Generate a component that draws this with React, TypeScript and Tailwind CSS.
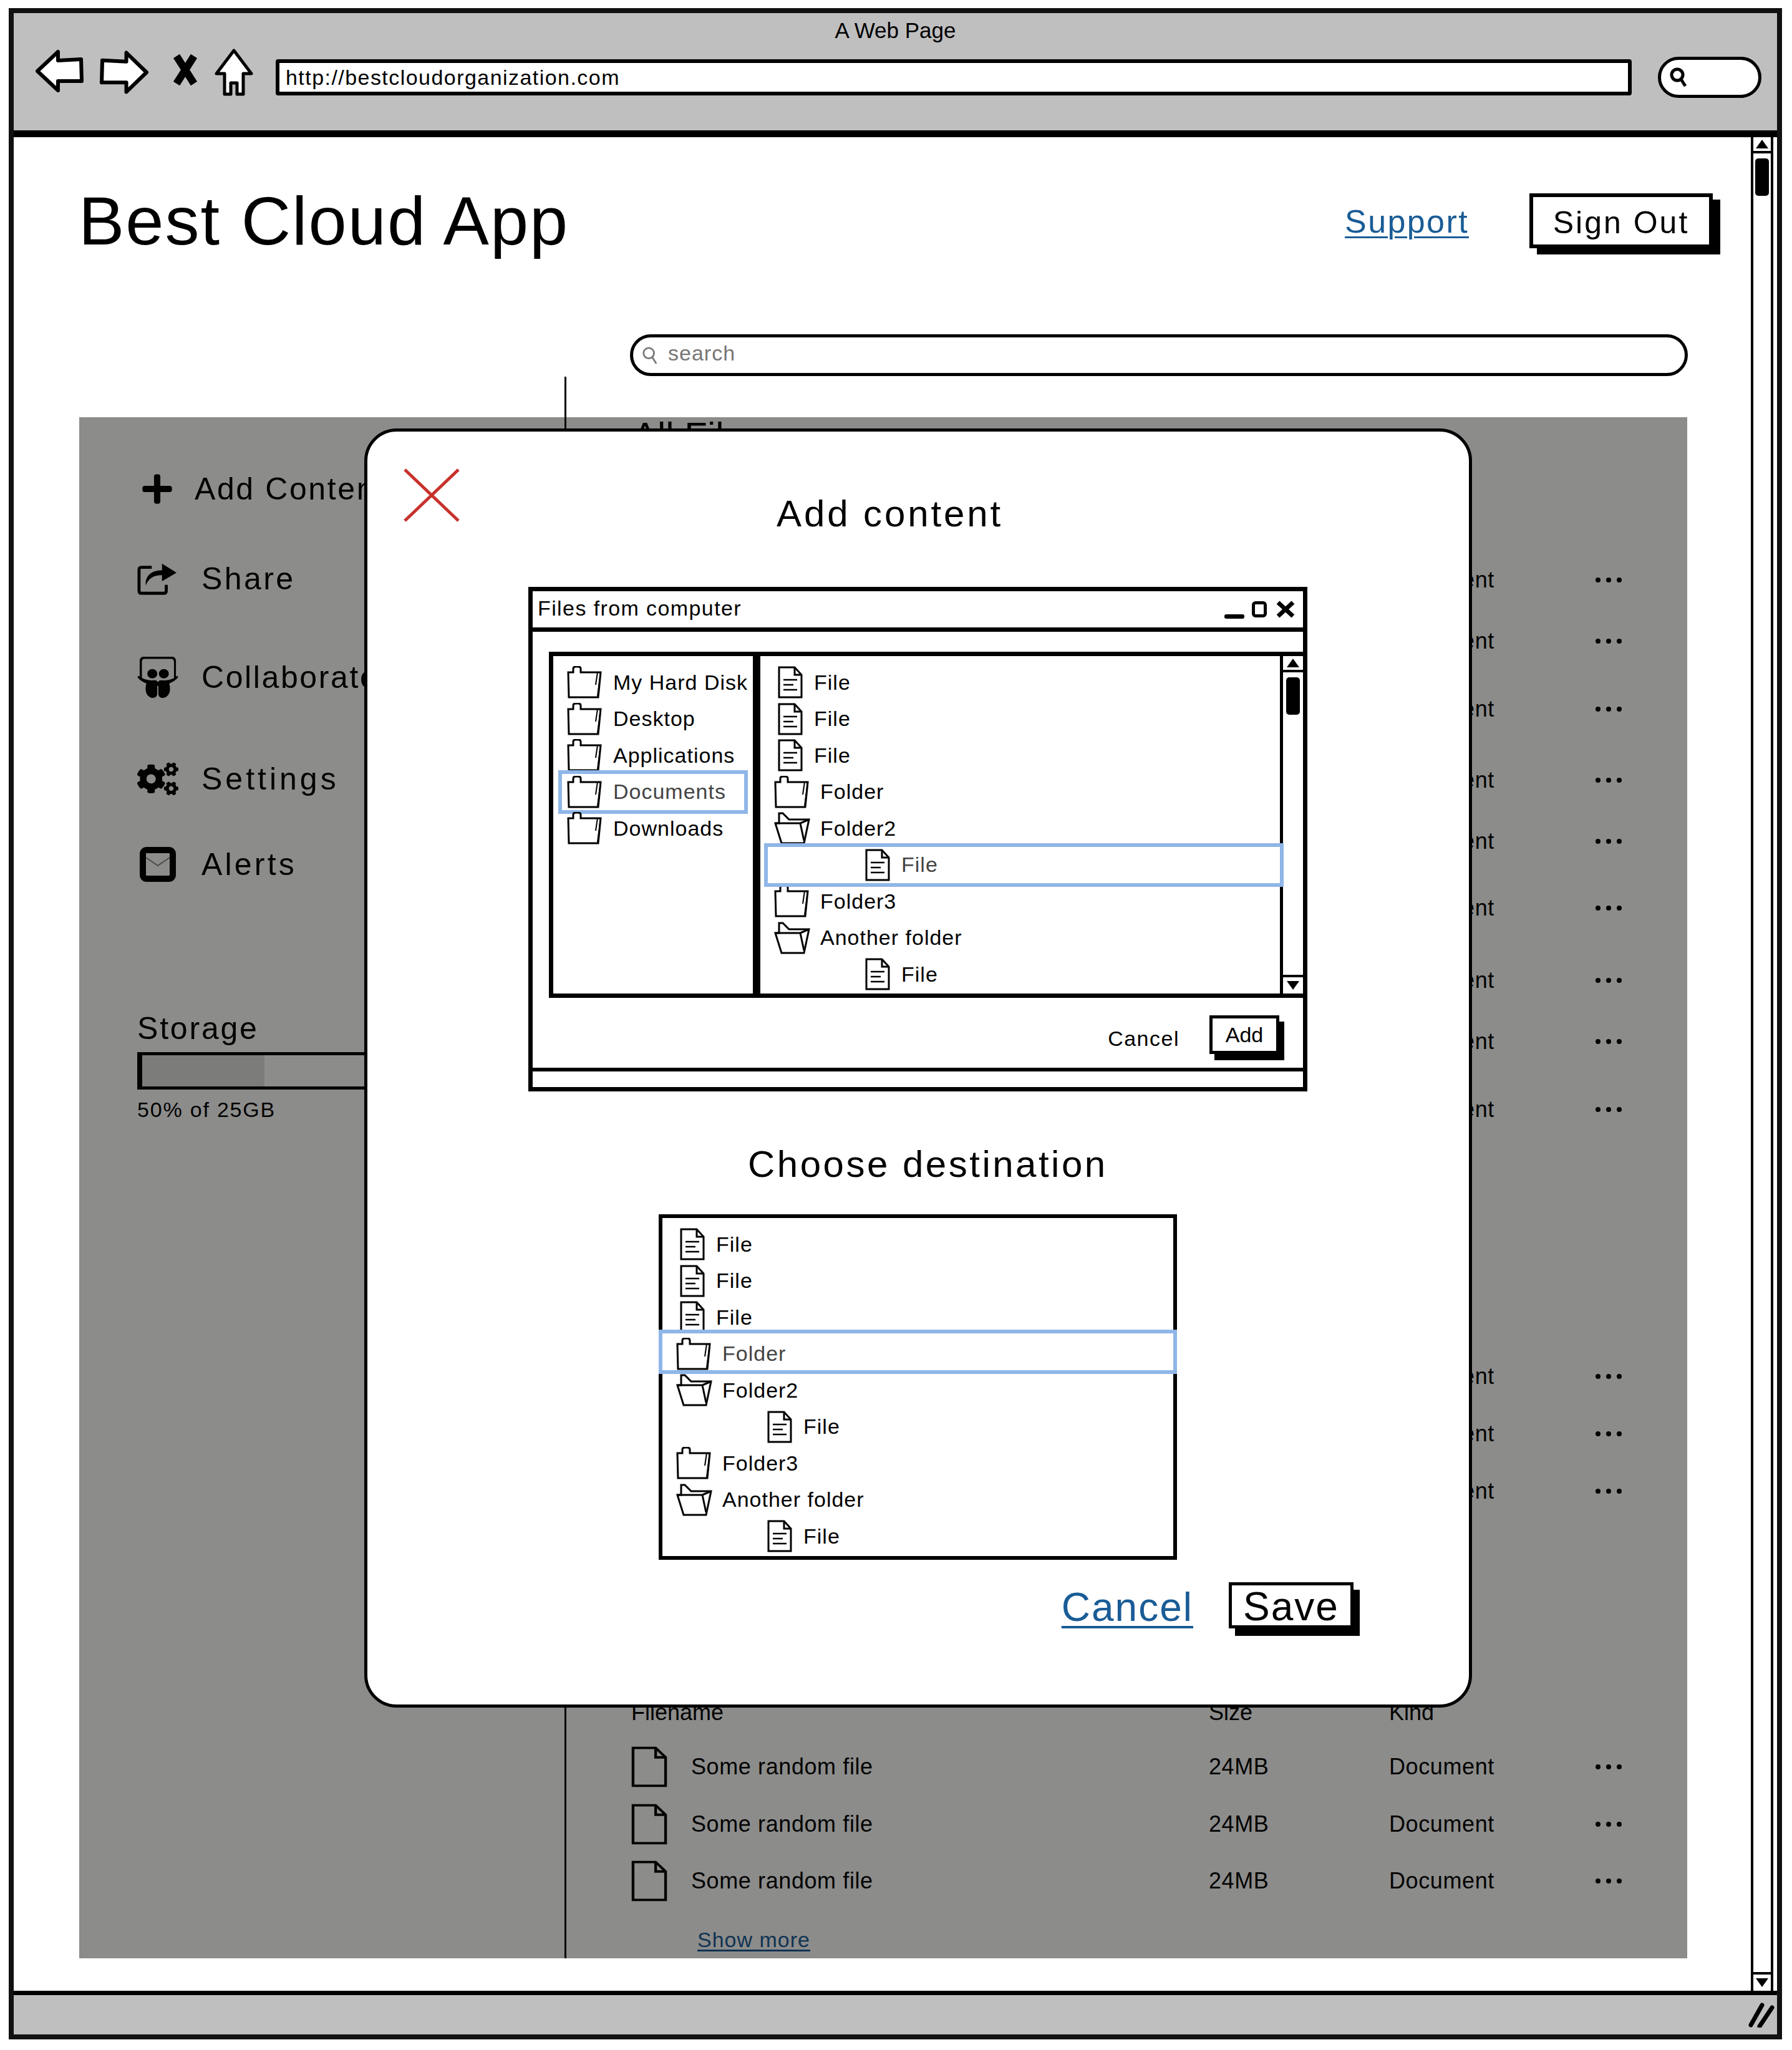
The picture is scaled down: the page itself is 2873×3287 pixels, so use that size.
import { FaCogs, FaPlus, FaSlideshare } from 'react-icons/fa';

const FONT = "font-['Liberation_Sans',Arial,sans-serif]";

const LOCAL_TREE = [
  { type: 'file', label: 'File' },
  { type: 'file', label: 'File' },
  { type: 'file', label: 'File' },
  { type: 'folder', label: 'Folder' },
  { type: 'open', label: 'Folder2' },
  { type: 'child', label: 'File', selected: true },
  { type: 'folder', label: 'Folder3' },
  { type: 'open', label: 'Another folder' },
  { type: 'child', label: 'File' },
];

const DEST_TREE = LOCAL_TREE.map((item) => ({ ...item, selected: item.label === 'Folder' }));

const DISKS = ['My Hard Disk', 'Desktop', 'Applications', 'Documents', 'Downloads'];

const SIDE_LINKS = [
  { label: 'Share', icon: <ShareIcon />, margin: 'mt-[84px] tracking-[3.4px]' },
  { label: 'Collaborate', icon: <FaSlideshare className="h-[66px] w-[66px]" />, margin: 'mt-[98px] tracking-[2.6px]' },
  { label: 'Settings', icon: <FaCogs className="h-[62px] w-[66px]" />, margin: 'mt-[103px] tracking-[5px]' },
  { label: 'Alerts', icon: <EnvelopeIcon />, margin: 'mt-[77px] tracking-[4.2px]' },
];

const FIRST_ROWS = ['mt-[166px]', 'mt-[28px]', 'mt-[39px]', 'mt-[44px]', 'mt-[28px]', 'mt-[37px]', 'mt-[46px]', 'mt-[28px]', 'mt-[39px]', 'mt-[358px]', 'mt-[22px]', 'mt-[22px]'];
const LAST_ROWS = ['mt-[27px]', 'mt-[22px]', 'mt-[21px]'];

function ShareIcon() {
  return (
    <svg viewBox="0 0 66 54" className="h-[54px] w-[64px]">
      <path d="M24 8 H7 Q3 8 3 12 V47 Q3 51 7 51 H44 Q48 51 48 47 V37" fill="none" stroke="#000" strokeWidth="5" />
      <path d="M14 38 C13 20 26 13 41 13 V2 L65 17 L41 31 V21 C30 21 20 24 14 38 Z" fill="#000" />
    </svg>
  );
}

function EnvelopeIcon() {
  return (
    <svg viewBox="0 0 58 58" className="ml-[4px] h-[58px] w-[58px]">
      <rect x="5" y="6" width="48" height="46" rx="6" fill="#fff" stroke="#000" strokeWidth="10" />
      <path d="M10 18 L29 31 L48 18" fill="none" stroke="#888" strokeWidth="2" />
    </svg>
  );
}

function FileIcon({ lines = true, className }: { lines?: boolean; className: string }) {
  return (
    <svg viewBox="0 0 40 52" className={className} preserveAspectRatio="none">
      <path d="M2 2 H27 L38 14 V50 H2 Z" fill="#fff" stroke="#000" strokeWidth="3" />
      <path d="M27 2 V14 H38" fill="none" stroke="#000" strokeWidth="3" />
      {lines && <path d="M9 22 H31 M9 30 H25 M9 38 H31" stroke="#000" strokeWidth="2.5" />}
    </svg>
  );
}

function FolderIcon() {
  return (
    <svg viewBox="0 0 60 52" className="h-[52px] w-[60px] shrink-0">
      <path d="M4 10 H12 V4 Q12 1 16 1 H20 Q24 1 24 4 V10 H56 L52 50 H5 Z" fill="#fff" stroke="#000" strokeWidth="3" />
      <path d="M51 10 L48 30 M56 10 L51 48" fill="none" stroke="#000" strokeWidth="2" />
    </svg>
  );
}

function OpenFolderIcon() {
  return (
    <svg viewBox="0 0 60 52" className="h-[52px] w-[60px] shrink-0">
      <path d="M10 18 V2 H16 L26 12 H58 L50 50 H14 L4 18 Z" fill="#fff" stroke="#000" strokeWidth="3" />
      <path d="M4 18 H44 L50 46 M44 18 L58 12" fill="none" stroke="#000" strokeWidth="3" />
    </svg>
  );
}

function TreeRow({ type, label, selected, frame }: { type: string; label: string; selected?: boolean; frame: string }) {
  const isFolder = type === 'folder' || type === 'open';
  return (
    <div className="relative flex h-[58.5px] items-center text-[34px] tracking-[1px] text-black">
      {type === 'file' && <FileIcon className="ml-[28px] mr-[18px] h-[52px] w-[40px] shrink-0" />}
      {type === 'child' && <FileIcon className="ml-[168px] mr-[18px] h-[52px] w-[40px] shrink-0" />}
      {isFolder && <div className="ml-[20px] mr-[16px] shrink-0">{type === 'open' ? <OpenFolderIcon /> : <FolderIcon />}</div>}
      <span className={selected ? 'text-[#444]' : ''}>{label}</span>
      {selected && <div className={`absolute border-[6px] border-[#8fb6e8] ${frame}`} />}
    </div>
  );
}

function Scrollbar({ className }: { className: string }) {
  return (
    <div className={`flex shrink-0 flex-col bg-white ${className}`}>
      <div className="flex h-[26px] items-center justify-center border-b-[4px] border-black">
        <div className="h-0 w-0 border-x-[10px] border-b-[14px] border-x-transparent border-b-black" />
      </div>
      <div className="mx-auto mt-[8px] h-[60px] w-[22px] rounded-[5px] bg-black" />
      <div className="flex-1" />
      <div className="flex h-[30px] items-center justify-center border-t-[4px] border-black">
        <div className="h-0 w-0 border-x-[10px] border-t-[14px] border-x-transparent border-t-black" />
      </div>
    </div>
  );
}

function FileRow({ margin }: { margin: string }) {
  return (
    <div className={`flex h-[70px] items-center text-[36px] tracking-[0.6px] text-black ${margin}`}>
      <FileIcon lines={false} className="ml-[2px] h-[66px] w-[58px] shrink-0" />
      <span className="ml-[38px] w-[830px] shrink-0">Some random file</span>
      <span className="w-[289px] shrink-0">24MB</span>
      <span className="w-[331px] shrink-0">Document</span>
      <div className="flex gap-[9px]">
        <span className="h-[8px] w-[8px] rounded-full bg-black" />
        <span className="h-[8px] w-[8px] rounded-full bg-black" />
        <span className="h-[8px] w-[8px] rounded-full bg-black" />
      </div>
    </div>
  );
}

function MagnifierIcon({ className, width }: { className: string; width: string }) {
  return (
    <svg viewBox="0 0 28 32" className={className}>
      <circle cx="12" cy="12" r="9" fill="none" stroke="currentColor" strokeWidth={width} />
      <path d="M18 19 L25 30" stroke="currentColor" strokeWidth={width} />
    </svg>
  );
}

function BrowserBar() {
  return (
    <div className="h-[188px] shrink-0 bg-[#bfbfbf]">
      <div className="pt-[8px] text-center text-[35px] leading-[40px] text-black">A Web Page</div>
      <div className="mt-[20px] flex h-[70px] items-center pl-[35px]">
        <svg viewBox="0 0 77 68" className="mb-[20px] h-[70px] w-[77px]">
          <path d="M3 34 L36 3 V17 L73 15 L74 50 L36 50 V65 Z" fill="#fff" stroke="#000" strokeWidth="6" strokeLinejoin="round" />
        </svg>
        <svg viewBox="0 0 77 68" className="mb-[16px] ml-[26px] h-[72px] w-[78px]">
          <path d="M74 34 L42 3 V17 L4 15 L3 50 L42 50 V65 Z" fill="#fff" stroke="#000" strokeWidth="6" strokeLinejoin="round" />
        </svg>
        <svg viewBox="0 0 44 52" className="mb-[24px] ml-[37px] h-[52px] w-[44px]">
          <path d="M8 4 L36 48 M36 4 L8 48" stroke="#000" strokeWidth="12" />
        </svg>
        <svg viewBox="0 0 62 76" className="mb-[16px] ml-[25px] h-[76px] w-[62px]">
          <path d="M31 3 L59 40 L46 40 V73 H36 V55 H26 V73 H16 V40 L3 40 Z" fill="#fff" stroke="#000" strokeWidth="5" strokeLinejoin="round" />
        </svg>
        <div className="ml-[36px] flex h-[58px] w-[2174px] items-center rounded-[4px] border-[6px] border-black bg-white pl-[10px] text-[34px] tracking-[1.45px] text-black">
          http://bestcloudorganization.com
        </div>
        <div className="ml-[42px] flex h-[66px] w-[166px] items-center rounded-[34px] border-[5px] border-black bg-white pl-[14px]">
          <MagnifierIcon className="h-[32px] w-[28px]" width="5" />
        </div>
      </div>
    </div>
  );
}

function PageBehind() {
  return (
    <>
      <header className="flex items-center justify-between pl-[104px] pr-[61px] pt-[79px]">
        <h1 className="text-[110px] leading-[110px] tracking-[2px] text-black">Best Cloud App</h1>
        <div className="flex items-start">
          <a className="mt-[6px] text-[52px] tracking-[2.4px] text-[#1a5c96] underline decoration-[3px] underline-offset-[6px]">Support</a>
          <button className="ml-[97px] h-[88px] w-[294px] border-[6px] border-black bg-white pt-[4px] text-[50px] tracking-[3px] text-black shadow-[12px_10px_0_#000]">
            Sign Out
          </button>
        </div>
      </header>
      <div className="ml-[988px] mr-[101px] mt-[127px] flex h-[67px] items-center rounded-[34px] border-[5px] border-black pl-[14px] text-[34px] tracking-[1px] text-[#777]">
        <MagnifierIcon className="h-[30px] w-[26px]" width="3" />
        <span className="mb-[6px] ml-[16px]">search</span>
      </div>
      <div className="mt-[1px] flex h-[2536px]">
        <aside className="w-[883px] shrink-0 pl-[198px] pt-[150px]">
          <div className="flex h-[60px] items-center text-[50px] tracking-[2.6px] text-black">
            <FaPlus className="ml-[5px] h-[54px] w-[54px]" />
            <span className="ml-[33px]">Add Content</span>
          </div>
          {SIDE_LINKS.map((link) => (
            <div key={link.label} className={`flex h-[60px] items-center text-[50px] text-black ${link.margin}`}>
              <div className="w-[103px] shrink-0">{link.icon}</div>
              <span>{link.label}</span>
            </div>
          ))}
          <div className="mt-[203px] text-[50px] leading-[60px] tracking-[2.8px] text-black">Storage</div>
          <div className="mt-[8px] h-[60px] w-[400px] border-y-[5px] border-l-[8px] border-black bg-white">
            <div className="h-full w-1/2 bg-[#e2e2e2]" />
          </div>
          <div className="mt-[12px] text-[34px] leading-[40px] tracking-[1.8px] text-black">50% of 25GB</div>
        </aside>
        <main className="flex-1 border-l-[3px] border-black pl-[102px]">
          <h2 className="mt-[65px] h-[60px] pl-[4px] text-[60px] leading-[60px] text-black">All Files</h2>
          {FIRST_ROWS.map((margin, i) => (
            <FileRow key={i} margin={margin} />
          ))}
          <div className="mt-[295px] flex h-[50px] items-center pl-[2px] text-[36px] text-black">
            <span className="w-[926px]">Filename</span>
            <span className="w-[289px]">Size</span>
            <span>Kind</span>
          </div>
          {LAST_ROWS.map((margin, i) => (
            <FileRow key={i} margin={margin} />
          ))}
          <a className="ml-[108px] mt-[34px] block text-[34px] leading-[50px] tracking-[1px] text-[#1a5c96] underline decoration-[3px] underline-offset-[4px]">
            Show more
          </a>
        </main>
      </div>
    </>
  );
}

function FilesWindow() {
  return (
    <div className="ml-[258px] mt-[82px] flex h-[809px] w-[1249px] flex-col border-[7px] border-black">
      <div className="flex h-[65px] shrink-0 items-center justify-between border-b-[7px] border-black pl-[8px] pr-[12px] text-[34px] tracking-[1.4px] text-black">
        <span className="mt-[-3px]">Files from computer</span>
        <div className="flex items-center">
          <div className="mt-[22px] h-[7px] w-[32px] rounded-[3px] bg-black" />
          <div className="ml-[12px] h-[26px] w-[24px] rounded-[6px] border-[5px] border-black" />
          <svg viewBox="0 0 32 28" className="ml-[14px] h-[28px] w-[32px]">
            <path d="M4 3 L28 25 M28 3 L4 25" stroke="#000" strokeWidth="7" />
          </svg>
        </div>
      </div>
      <div className="flex flex-1 pl-[26px] pt-[32px]">
        <div className="flex h-[555px] w-[333px] shrink-0 flex-col border-y-[7px] border-l-[7px] border-r-[6px] border-black pt-[13px]">
          {DISKS.map((label) => (
            <TreeRow key={label} type="folder" label={label} selected={label === 'Documents'} frame="inset-x-[8px] inset-y-[-6px]" />
          ))}
        </div>
        <div className="flex h-[555px] flex-1 border-y-[7px] border-l-[6px] border-black">
          <div className="flex-1 pt-[13px]">
            {LOCAL_TREE.map((item, i) => (
              <TreeRow key={i} {...item} frame="inset-y-[-6px] left-[6px] right-[-6px] z-10" />
            ))}
          </div>
          <Scrollbar className="w-[37px] border-l-[5px] border-black" />
        </div>
      </div>
      <div className="flex h-[110px] shrink-0 items-start justify-end pr-[38px]">
        <span className="mt-[38px] text-[34px] tracking-[1.5px] text-black">Cancel</span>
        <button className="ml-[48px] mt-[26px] h-[62px] w-[112px] border-[5px] border-black bg-white text-[34px] text-black shadow-[8px_10px_0_#000]">
          Add
        </button>
      </div>
      <div className="h-[31px] shrink-0 border-t-[6px] border-black" />
    </div>
  );
}

function AddContentModal() {
  return (
    <div className="absolute left-[562px] top-[467px] h-[2051px] w-[1776px] rounded-[52px] border-[5px] border-black bg-white pt-[97px]">
      <svg viewBox="0 0 94 90" className="absolute left-[56px] top-[57px] h-[90px] w-[94px]">
        <path d="M4 4 L90 86 M90 4 L4 86" stroke="#c8322b" strokeWidth="5" />
      </svg>
      <h3 className="ml-[656px] text-[60px] leading-[70px] tracking-[3.9px] text-black">Add content</h3>
      <FilesWindow />
      <h3 className="ml-[610px] mt-[82px] text-[60px] leading-[70px] tracking-[3.5px] text-black">Choose destination</h3>
      <div className="ml-[467px] mt-[45px] h-[554px] w-[831px] border-[6px] border-black pt-[13px]">
        {DEST_TREE.map((item, i) => (
          <TreeRow key={i} {...item} frame="bottom-[-3px] top-[-10px] inset-x-[-6px]" />
        ))}
      </div>
      <div className="mt-[36px] flex items-start justify-end pr-[185px]">
        <a className="mt-[5px] text-[64px] leading-[70px] tracking-[2px] text-[#1a5c96] underline decoration-[4px] underline-offset-[8px]">Cancel</a>
        <button className="ml-[57px] h-[74px] w-[200px] border-[5px] border-black bg-white pt-[4px] text-[64px] leading-[60px] tracking-[2px] text-black shadow-[10px_12px_0_#000]">
          Save
        </button>
      </div>
    </div>
  );
}

export default function App() {
  return (
    <div className={`h-[3287px] w-[2873px] bg-white pl-[14px] pt-[13px] ${FONT}`}>
      <div className="flex h-[3257px] w-[2843px] flex-col border-[8px] border-[#111]">
        <BrowserBar />
        <div className="flex min-h-0 flex-1 flex-col border-t-[11px] border-black">
          <div className="flex min-h-0 flex-1">
            <div className="relative min-w-0 flex-1 overflow-hidden">
              <PageBehind />
              <div className="absolute left-[105px] top-[449px] h-[2471px] w-[2578px] bg-[#040402]/[0.46]" />
              <AddContentModal />
            </div>
            <Scrollbar className="mr-[6px] w-[36px] border-x-[4px] border-black" />
          </div>
          <div className="flex h-[70px] shrink-0 items-center justify-end border-t-[7px] border-black bg-[#bfbfbf] pr-[4px]">
            <svg viewBox="0 0 46 40" className="h-[40px] w-[46px]">
              <path d="M8 36 L26 4 M22 38 L42 8" stroke="#000" strokeWidth="7" strokeLinecap="round" />
            </svg>
          </div>
        </div>
      </div>
    </div>
  );
}
